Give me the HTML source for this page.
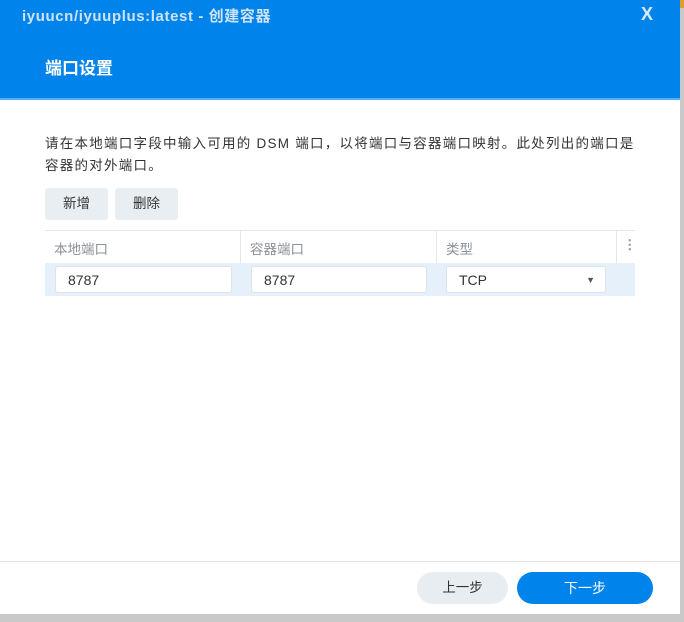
<!DOCTYPE html><html><head><meta charset="utf-8"><style>
body{margin:0;width:684px;height:622px;background:#c9c9c9;font-family:"Liberation Sans","Noto Sans CJK SC",sans-serif;position:relative;overflow:hidden}
.d{position:absolute;left:0;top:0;width:680px;height:614px;background:#fff}
.h{position:absolute;left:0;top:0;width:680px;height:100px;background:#0084ec;border-bottom:2px solid #57aef5;box-sizing:border-box}
.t{position:absolute;left:22px;top:5px;font-size:15px;letter-spacing:0.6px;color:#cfe3f8;font-weight:bold}
.x{position:absolute;left:641px;top:4px;font-size:18px;color:#d8eafb;font-weight:bold}
.s{position:absolute;left:45px;top:54px;font-size:17px;color:#fff;font-weight:bold}
.p{position:absolute;left:45px;top:133px;width:600px;font-size:13.5px;letter-spacing:1.25px;line-height:22px;color:#333}
.b{position:absolute;top:188px;height:32px;background:#e9eef2;border-radius:3px;font-size:13.5px;color:#333;line-height:32px;text-align:center}
.th{position:absolute;top:230px;left:45px;width:590px;height:33px;border-top:1px solid #e4e8ec;font-size:13.5px;color:#8a9198}
.row{position:absolute;top:263px;left:45px;width:590px;height:33px;background:#e6f0fb}
.in{position:absolute;top:3px;height:27px;background:#fff;border:1px solid #dde3e8;border-radius:3px;box-sizing:border-box;font-size:14px;color:#333;line-height:26px;padding-left:12px}
.f{position:absolute;left:0;top:561px;width:680px;border-top:1px solid #e2e6ea}
</style></head><body>
<div style="position:absolute;left:680px;top:0;width:4px;height:8px;background:#d9a030"></div>
<div class="d">
<div class="h"><div class="t">iyuucn/iyuuplus:latest - 创建容器</div><div class="x">X</div><div class="s">端口设置</div></div>
<div class="p">请在本地端口字段中输入可用的 DSM 端口，以将端口与容器端口映射。此处列出的端口是<br>容器的对外端口。</div>
<div class="b" style="left:45px;width:63px">新增</div>
<div class="b" style="left:115px;width:63px">删除</div>
<div class="th">
<span style="position:absolute;left:9px;top:7px">本地端口</span>
<div style="position:absolute;left:195px;top:0;height:33px;border-left:1px solid #e4e8ec"></div>
<span style="position:absolute;left:205px;top:7px">容器端口</span>
<div style="position:absolute;left:391px;top:0;height:33px;border-left:1px solid #e4e8ec"></div>
<span style="position:absolute;left:401px;top:7px">类型</span>
<div style="position:absolute;left:571px;top:0;height:33px;border-left:1px solid #e4e8ec"></div>
<span style="position:absolute;left:578px;top:6px;font-weight:bold">⋮</span>
</div>
<div class="row">
<div class="in" style="left:10px;width:177px">8787</div>
<div class="in" style="left:206px;width:176px">8787</div>
<div class="in" style="left:401px;width:160px">TCP<span style="position:absolute;right:10px;top:0;font-size:9px;color:#555">▼</span></div>
</div>
<div class="f"></div>
<div style="position:absolute;left:417px;top:572px;width:91px;height:32px;border-radius:16px;background:#e8edf2;font-size:13.5px;color:#333;text-align:center;line-height:32px">上一步</div>
<div style="position:absolute;left:517px;top:572px;width:136px;height:32px;border-radius:16px;background:#0084ec;font-size:14px;color:#fff;text-align:center;line-height:32px">下一步</div>
</div>
</body></html>
